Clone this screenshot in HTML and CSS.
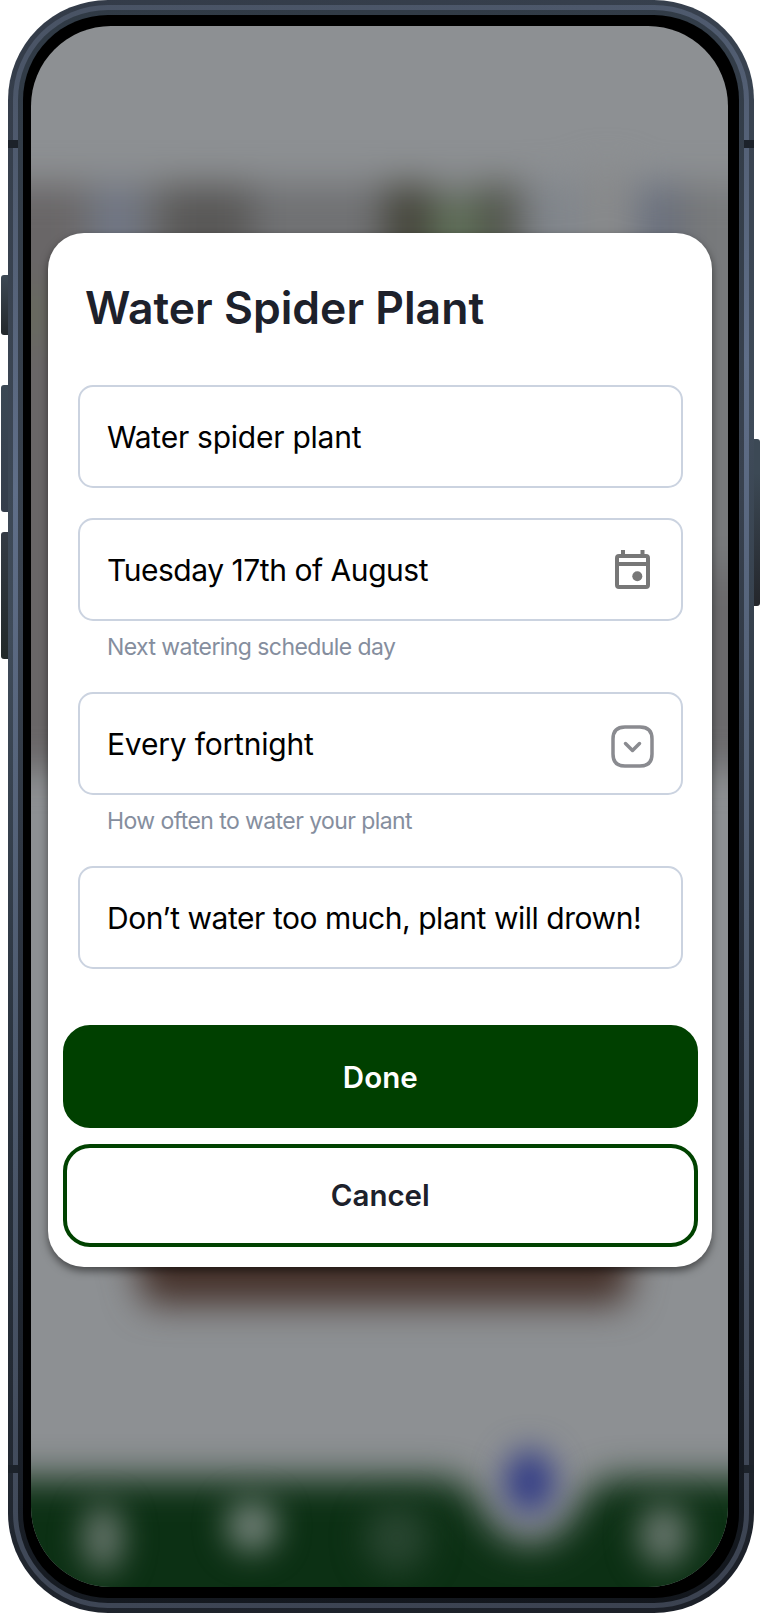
FILE: index.html
```html
<!DOCTYPE html>
<html lang="en">
<head>
<meta charset="utf-8">
<title>Water Spider Plant</title>
<link rel="stylesheet" href="styles.css">
</head>
<body>
<div class="device">
  <span class="key key-mute"></span><span class="key key-up"></span><span class="key key-down"></span><span class="key key-power"></span>
  <div class="frame"><div class="rail"><div class="inner-rail"><div class="bezel">
    <main class="screen">
      <svg class="backdrop" viewBox="31 26 697 1561" preserveAspectRatio="none" aria-hidden="true">
        <defs>
          <filter id="soft" x="-50%" y="-50%" width="200%" height="200%" color-interpolation-filters="sRGB"><feGaussianBlur stdDeviation="18"/></filter>
          <filter id="dot" x="-100%" y="-100%" width="300%" height="300%" color-interpolation-filters="sRGB"><feGaussianBlur stdDeviation="16"/></filter>
        </defs>
        <rect x="0" y="0" width="760" height="1614" fill="#8d9093"/>
        <g filter="url(#soft)">
          <rect x="-40" y="184" width="840" height="586" fill="#707173"/>
          <rect x="-40" y="184" width="120" height="586" fill="#696667"/>
          <rect x="690" y="184" width="120" height="380" fill="#787a7c"/>
          <rect x="690" y="580" width="120" height="190" fill="#6b6a6c"/>
          <rect x="98" y="188" width="38" height="80" fill="#707788"/>
          <rect x="162" y="184" width="90" height="80" fill="#595857"/>
          <rect x="385" y="184" width="46" height="80" fill="#45453b"/>
          <rect x="431" y="198" width="50" height="90" fill="#607059"/>
          <rect x="481" y="184" width="32" height="80" fill="#4e5247"/>
          <rect x="530" y="182" width="110" height="90" fill="#81868c"/>
          <rect x="585" y="170" width="45" height="90" fill="#898a8b"/>
          <rect x="644" y="184" width="32" height="90" fill="#697080"/>
          <rect x="-20" y="290" width="64" height="50" fill="#686c5b"/>
          <path d="M116 1180H650L624 1304H146Z" fill="#45312a"/>
          <path d="M-60 1478H446Q464 1480 478 1502Q498 1544 530 1544Q562 1544 582 1502Q596 1480 614 1478H820V1680H-60Z" fill="#0c3014"/>
        </g>
        <g filter="url(#dot)">
          <ellipse cx="103" cy="1538" rx="20" ry="34" fill="#6a786f"/>
          <ellipse cx="252" cy="1526" rx="25" ry="26" fill="#77857d"/>
          <ellipse cx="397" cy="1538" rx="32" ry="34" fill="#284530"/>
          <ellipse cx="664" cy="1535" rx="25" ry="31" fill="#69776e"/>
          <ellipse cx="530" cy="1482" rx="25" ry="32" fill="#303a86"/>
        </g>
      </svg>
      <section class="dialog">
        <h1 class="title">Water Spider Plant</h1>
        <div class="fields">
          <div class="field"><div class="box"><span class="value t-name">Water spider plant</span></div></div>
          <div class="field"><div class="box"><span class="value">Tuesday 17th of August</span>
            <svg class="icon calendar" viewBox="0 0 36 40" aria-hidden="true"><path fill="#777" fill-rule="evenodd" d="M6 0H10V4H25.500V0H29.500V4H31Q35 4 35 8V35Q35 39 31 39H4Q0 39 0 35V8Q0 4 4 4H6ZM4 8V12H31V8ZM4 16V35H31V16Z"/><circle cx="22.300" cy="26.300" r="5" fill="#777"/></svg></div>
            <p class="hint">Next watering schedule day</p></div>
          <div class="field"><div class="box"><span class="value t-every">Every fortnight</span>
            <svg class="icon chevron" viewBox="0 0 43 43" aria-hidden="true"><path d="M14 2H29Q41 2 41 14V29Q41 41 29 41H14Q2 41 2 29V14Q2 2 14 2Z"/><path d="m14.500 18.500 7 7 7-7"/></svg></div>
            <p class="hint">How often to water your plant</p></div>
          <div class="field"><div class="box"><span class="value">Don’t water too much, plant will drown!</span></div></div>
        </div>
        <div class="actions"><button class="btn done">Done</button><button class="btn cancel">Cancel</button></div>
      </section>
    </main>
  </div></div></div></div>
  <span class="seam s1"></span><span class="seam s2"></span><span class="seam s3"></span><span class="seam s4"></span>
</div>
</body>
</html>
```
FILE: styles.css
```css
* { box-sizing: border-box; }
body { margin: 0; background: #fff; font-family: Inter, "Liberation Sans", sans-serif; overflow: hidden; }
.device { position: relative; width: 760px; height: 1614px; padding: 0 6.500px 1px 8px; }
.frame { position: relative; height: 1613px; padding: 5px; border-radius: 100px; background: linear-gradient(165deg, #333b48, #3f4b59 35%, #29323d 60%, #1b1f27); }
.rail { height: 100%; padding: 5px; border-radius: 95px; background: linear-gradient(170deg, #485263, #5f6e88 28%, #4d5a6e 60%, #3b4250); }
.inner-rail { height: 100%; padding: 5px; border-radius: 90px; background: linear-gradient(170deg, #303a45, #39424f 35%, #242b36 65%, #12161c); }
.bezel { height: 100%; padding: 11px 11px 11px 8px; border-radius: 85px; background: #000; }
.screen { position: relative; height: 100%; border-radius: 80px; overflow: hidden; padding: 207px 15.500px 0 17.400px; }
.backdrop { position: absolute; inset: 0; width: 100%; height: 100%; }
.key { position: absolute; left: 1.200px; width: 8px; border-radius: 3px 0 0 3px; background: linear-gradient(#3d4955, #23282c); }
.key-mute { top: 275px; height: 60px; }
.key-up { top: 385px; height: 127px; background: linear-gradient(#3b4854, #343d4b); }
.key-down { top: 532px; height: 127px; background: linear-gradient(#343b45, #222929); }
.key-power { left: 752px; top: 439px; height: 167px; border-radius: 0 3px 3px 0; background: linear-gradient(#3c4955 20%, #24262b); }
.seam { position: absolute; height: 8px; width: 10px; left: 8px; background: #1c222a; }
.s1, .s2 { top: 140px; }
.s3, .s4 { top: 1465px; }
.s2, .s4 { left: 744px; }
.dialog { position: relative; height: 1034px; background: #fff; border-radius: 36px; padding: 48px 14.500px 19px 14.600px; display: flex; flex-direction: column; box-shadow: 0 4px 8px rgba(0,0,0,.5); }
.title { margin: 0 0 0 22px; height: 54px; line-height: 54px; font-size: 44.500px; font-weight: 600; color: #1d212b; white-space: nowrap; letter-spacing: 0; }
.fields { margin: 50px 15px 0; display: flex; flex-direction: column; gap: 30px; }
.box { display: flex; align-items: center; justify-content: space-between; height: 103px; border: 2px solid #cbd3e0; border-radius: 15px; padding: 0 28px 0 27px; }
.value { font-size: 30px; line-height: 36px; color: #000; white-space: nowrap; letter-spacing: -.46px; }
.t-name { letter-spacing: -.25px; }
.t-every { letter-spacing: -.2px; }
.hint { margin: 11px 0 0 29px; height: 30px; line-height: 30px; font-size: 23px; color: #858e9e; white-space: nowrap; letter-spacing: -.58px; }
.icon { flex: none; display: block; }
.calendar { width: 36px; height: 40px; margin-right: 2px; }
.chevron { width: 43px; height: 43px; margin: 5px -1px 0 0; fill: none; stroke: #8a8b90; stroke-width: 3.500; stroke-linecap: round; stroke-linejoin: round; }
.actions { display: flex; flex-direction: column; gap: 16px; margin-top: 56px; }
.btn { height: 103px; border: 4px solid #004200; border-radius: 27px; padding: 0; font: 600 29.500px Inter, sans-serif; }
.done { background: #004000; border-color: #004000; color: #fff; }
.cancel { background: #fff; color: #1d212b; padding-bottom: 2px; }
```
